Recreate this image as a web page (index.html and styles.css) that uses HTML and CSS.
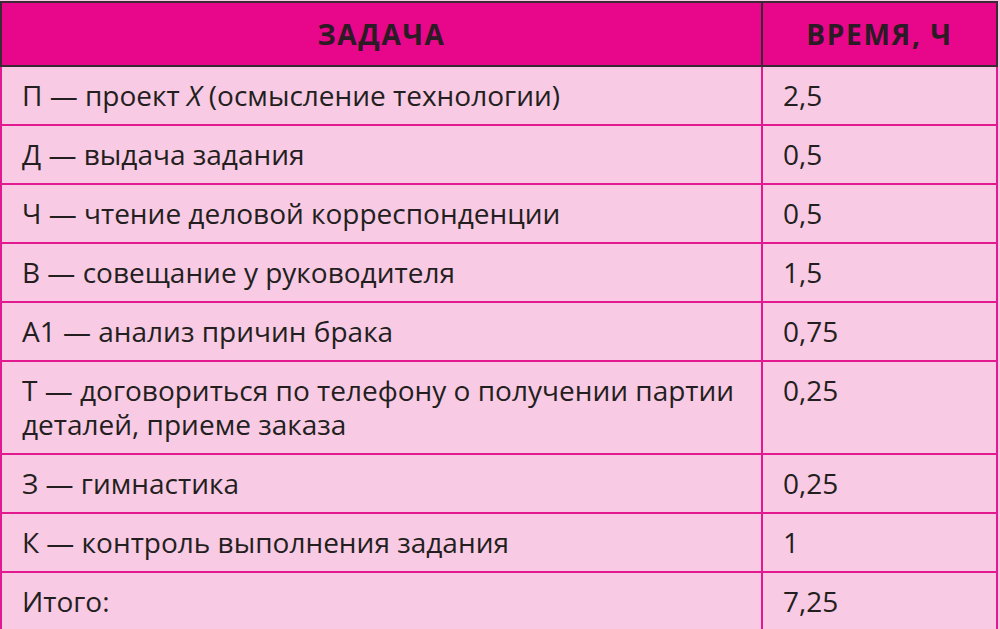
FILE: index.html
```html
<!DOCTYPE html>
<html lang="ru">
<head>
<meta charset="utf-8">
<link rel="stylesheet" href="styles.css">
</head>
<body>
<table class="tbl">
  <thead>
    <tr><th class="c-task">ЗАДАЧА</th><th class="c-time">ВРЕМЯ, Ч</th></tr>
  </thead>
  <tbody>
    <tr><td>П — проект <i>Х</i> (осмысление технологии)</td><td>2,5</td></tr>
    <tr><td>Д — выдача задания</td><td>0,5</td></tr>
    <tr><td>Ч — чтение деловой корреспонденции</td><td>0,5</td></tr>
    <tr><td>В — совещание у руководителя</td><td>1,5</td></tr>
    <tr><td>А1 — анализ причин брака</td><td>0,75</td></tr>
    <tr><td>Т — договориться по телефону о получении партии деталей, приеме заказа</td><td>0,25</td></tr>
    <tr><td>З — гимнастика</td><td>0,25</td></tr>
    <tr><td>К — контроль выполнения задания</td><td>1</td></tr>
    <tr><td>Итого:</td><td>7,25</td></tr>
  </tbody>
</table>
</body>
</html>
```
FILE: styles.css
```css
html, body {
  margin: 0;
  padding: 0;
  background: #f9cae4;
}
body {
  font-family: "Open Sans", "Noto Sans", sans-serif;
  color: #231f20;
}
.tbl {
  width: 998px;
  border-collapse: collapse;
  background: #f9cae4;
  margin-top: 1px;
}
.tbl th {
  background: #e8068b;
  color: #2b1b24;
  font-weight: 700;
  font-size: 28px;
  height: 62px;
  padding: 0;
  border: 2px solid #3a2a33;
  text-align: center;
  vertical-align: middle;
  letter-spacing: 1.7px;
}
.tbl .c-task { width: 759px; }
.tbl td {
  font-size: 28px;
  line-height: 34px;
  padding: 11px 20px 12px 20px;
  border: 2px solid #e3198f;
  vertical-align: top;
}
.tbl td i { font-style: italic; }
```
